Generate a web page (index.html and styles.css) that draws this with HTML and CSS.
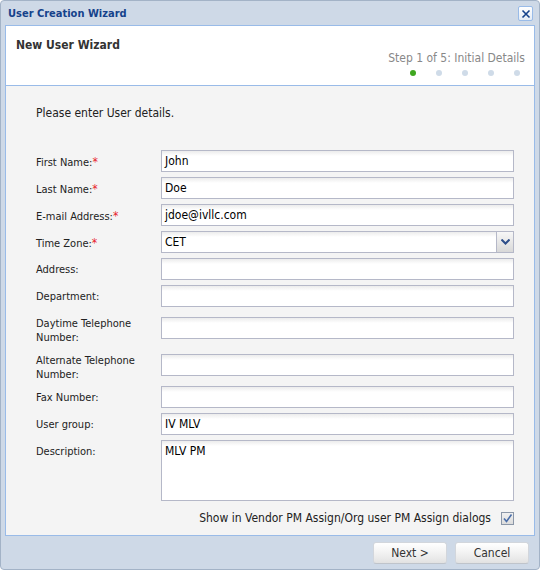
FILE: index.html
```html
<!DOCTYPE html>
<html>
<head>
<meta charset="utf-8">
<link rel="stylesheet" href="styles.css">
</head>
<body>
<div class="window">
  <div class="titlebar">
    <span class="title">User Creation Wizard</span>
    <span class="close"><svg width="12" height="12" viewBox="0 0 12 12"><path d="M2.5 2.5 L9.5 9.5 M9.5 2.5 L2.5 9.5" stroke="#15428b" stroke-width="1.6" fill="none"/></svg></span>
  </div>
  <div class="panel">
    <div class="header">
      <div class="hdr-title">New User Wizard</div>
      <div class="step">
        <div class="step-text">Step 1 of 5: Initial Details</div>
        <div class="dots"><span class="dot active"></span><span class="dot"></span><span class="dot"></span><span class="dot"></span><span class="dot"></span></div>
      </div>
    </div>
    <div class="body">
      <p class="intro">Please enter User details.</p>
      <div class="form">
        <div class="row"><label class="lbl">First Name:<span class="req">*</span></label><div class="field">John</div></div>
        <div class="row"><label class="lbl">Last Name:<span class="req">*</span></label><div class="field">Doe</div></div>
        <div class="row"><label class="lbl">E-mail Address:<span class="req">*</span></label><div class="field">jdoe@ivllc.com</div></div>
        <div class="row"><label class="lbl">Time Zone:<span class="req">*</span></label><div class="field combo"><span>CET</span><span class="trigger"><svg width="9" height="6" viewBox="0 0 9 6"><path d="M0.5 0.5 L4.5 4.5 L8.5 0.5" stroke="#2d4e8a" stroke-width="2" fill="none"/></svg></span></div></div>
        <div class="row"><label class="lbl">Address:</label><div class="field"></div></div>
        <div class="row"><label class="lbl">Department:</label><div class="field"></div></div>
        <div class="row tall"><label class="lbl">Daytime Telephone<br>Number:</label><div class="field"></div></div>
        <div class="row tall"><label class="lbl">Alternate Telephone<br>Number:</label><div class="field"></div></div>
        <div class="row"><label class="lbl">Fax Number:</label><div class="field"></div></div>
        <div class="row"><label class="lbl">User group:</label><div class="field">IV MLV</div></div>
        <div class="row desc"><label class="lbl">Description:</label><div class="field area">MLV PM</div></div>
      </div>
      <div class="check-row">
        <span>Show in Vendor PM Assign/Org user PM Assign dialogs</span>
        <span class="checkbox"><svg width="11" height="11" viewBox="0 0 11 11"><path d="M2 5.5 L4.5 8.5 L9.5 1.5" stroke="#4a6ea9" stroke-width="1.6" fill="none"/></svg></span>
      </div>
    </div>
  </div>
  <div class="footer">
    <button class="btn">Next &gt;</button>
    <button class="btn">Cancel</button>
  </div>
</div>
</body>
</html>
```

FILE: styles.css
```css
* { box-sizing: border-box; }
html, body { margin: 0; padding: 0; }
body {
  width: 540px;
  height: 570px;
  font-family: "DejaVu Sans Condensed", "DejaVu Sans", sans-serif;
  color: #222;
}
.window {
  width: 540px;
  height: 570px;
  border: 1px solid #a3b3c7;
  border-radius: 4px;
  background: #ced9e7;
  padding: 0 4px;
  display: flex;
  flex-direction: column;
}
.titlebar {
  height: 24px;
  display: flex;
  align-items: center;
  justify-content: space-between;
  padding: 0 2px 0 3px;
}
.title {
  font-weight: bold;
  font-size: 11px;
  color: #15428b;
}
.close {
  width: 15px;
  height: 15px;
  border: 1px solid #99bbe8;
  border-radius: 2px;
  background: linear-gradient(#ffffff, #e3ebf5);
  display: flex;
  align-items: center;
  justify-content: center;
  margin-top: 1px;
}
.panel {
  height: 511px;
  border: 1px solid #99bbe8;
  display: flex;
  flex-direction: column;
}
.header {
  height: 60px;
  background: #fff;
  border-bottom: 1px solid #99bbe8;
  display: flex;
  justify-content: space-between;
  padding: 11px 9px 9px 10px;
}
.hdr-title {
  font-weight: bold;
  font-size: 12px;
  line-height: 16px;
  color: #333;
  align-self: flex-start;
}
.step {
  align-self: flex-end;
  display: flex;
  flex-direction: column;
  align-items: flex-end;
}
.step-text {
  font-size: 12px;
  line-height: 14px;
  color: #888;
}
.dots {
  display: flex;
  gap: 20px;
  margin-top: 5px;
  margin-right: 5px;
}
.dot {
  width: 6px;
  height: 6px;
  border-radius: 50%;
  background: #cfdbe8;
}
.dot.active { background: #3fa71f; }
.body {
  flex: 1;
  background: #f4f4f4;
  padding: 0 19px 0 30px;
}
.intro {
  margin: 20px 0 30px;
  font-size: 12px;
  line-height: 14px;
}
.form {
  display: flex;
  flex-direction: column;
  gap: 5px;
}
.row {
  display: flex;
  align-items: flex-start;
}
.lbl {
  width: 125px;
  flex: none;
  font-size: 11px;
  line-height: 14px;
  padding-top: 5px;
}
.req { color: #e8232b; font-size: 12px; }
.tall .lbl { padding-top: 5px; height: 32px; }
.tall .field { margin-top: 5px; }
.field {
  width: 353px;
  height: 22px;
  border: 1px solid #b5b8c8;
  background: linear-gradient(#ececec, #ffffff 5px);
  font-size: 12px;
  line-height: 21px;
  padding: 0 3px;
  color: #000;
}
.combo {
  display: flex;
  justify-content: space-between;
  padding-right: 0;
}
.trigger {
  width: 17px;
  height: 20px;
  border-left: 1px solid #b5b8c8;
  background: linear-gradient(#f7f7f7, #d8d8d8);
  display: flex;
  align-items: center;
  justify-content: center;
}
.desc .field { height: 61px; line-height: 14px; padding-top: 3px; }
.check-row {
  display: flex;
  justify-content: flex-end;
  align-items: center;
  margin-top: 10px;
  margin-right: 1px;
  font-size: 12px;
  line-height: 14px;
  gap: 10px;
}
.checkbox {
  width: 13px;
  height: 13px;
  border: 1px solid #8b97a8;
  background: linear-gradient(#f0f0f0, #dcdcdc);
  display: flex;
  align-items: center;
  justify-content: center;
}
.footer {
  flex: 1;
  display: flex;
  justify-content: flex-end;
  align-items: flex-start;
  gap: 8px;
  padding: 6px 6px 0 0;
}
.btn {
  width: 74px;
  height: 22px;
  border: 1px solid #d2d6dc;
  border-bottom-color: #bfc4cb;
  border-radius: 3px;
  background: linear-gradient(#ffffff, #f2f2f2 50%, #e2e2e2);
  font-family: inherit;
  font-size: 12px;
  color: #333;
  padding: 0;
}
```
